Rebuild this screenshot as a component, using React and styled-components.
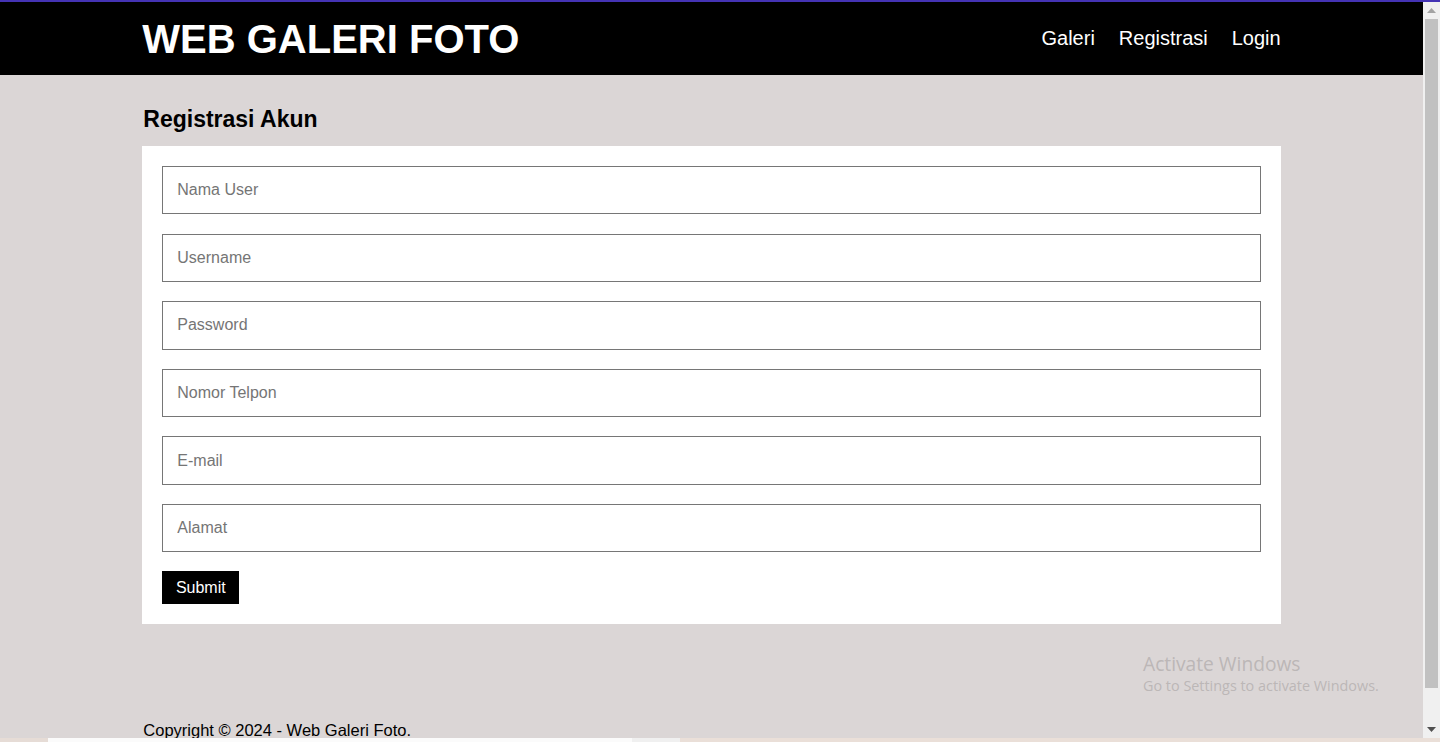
import React from "react";
import styled, { createGlobalStyle } from "styled-components";

const GlobalStyle = createGlobalStyle`
  html, body {
    margin: 0;
    padding: 0;
    height: 742px;
    overflow: hidden;
    font-family: "Liberation Sans", Arial, sans-serif;
  }
  * {
    box-sizing: border-box;
  }
`;

const fields = [
  { name: "namauser", placeholder: "Nama User", type: "text" },
  { name: "username", placeholder: "Username", type: "text" },
  { name: "password", placeholder: "Password", type: "password" },
  { name: "telpon", placeholder: "Nomor Telpon", type: "text" },
  { name: "email", placeholder: "E-mail", type: "email" },
  { name: "alamat", placeholder: "Alamat", type: "text" },
];

const App = () => {
  return (
    <>
      <GlobalStyle />
      <Frame>
        <Viewport>
          <Page>
            <Header>
              <HeaderInner>
                <Brand>WEB GALERI FOTO</Brand>
                <Nav>
                  <NavLink href="#">Galeri</NavLink>
                  <NavLink href="#">Registrasi</NavLink>
                  <NavLink href="#">Login</NavLink>
                </Nav>
              </HeaderInner>
            </Header>

            <Main>
              <Title>Registrasi Akun</Title>
              <Card>
                <Form onSubmit={(e) => e.preventDefault()}>
                  {fields.map((f) => (
                    <Input
                      key={f.name}
                      name={f.name}
                      type={f.type}
                      placeholder={f.placeholder}
                    />
                  ))}
                  <SubmitButton type="submit">Submit</SubmitButton>
                </Form>
              </Card>
            </Main>

            <Footer>Copyright © 2024 - Web Galeri Foto.</Footer>

            <Watermark>
              <WatermarkTitle>Activate Windows</WatermarkTitle>
              <WatermarkText>Go to Settings to activate Windows.</WatermarkText>
            </Watermark>
          </Page>

          <Scrollbar>
            <ArrowButton>
              <svg width="9" height="5" viewBox="0 0 9 5">
                <path d="M0 5 L4.5 0 L9 5 Z" fill="#a3a3a3" />
              </svg>
            </ArrowButton>
            <Track>
              <Thumb />
            </Track>
            <ArrowButton>
              <svg width="9" height="5" viewBox="0 0 9 5">
                <path d="M0 0 L9 0 L4.5 5 Z" fill="#505050" />
              </svg>
            </ArrowButton>
          </Scrollbar>
        </Viewport>
        <Taskbar />
      </Frame>
    </>
  );
};

const Frame = styled.div`
  height: 742px;
  border-top: 2px solid #4433b4;
  display: flex;
  flex-direction: column;
`;

const Viewport = styled.div`
  flex: 1;
  display: flex;
  min-height: 0;
`;

const Taskbar = styled.div`
  height: 4px;
  background: linear-gradient(
    to right,
    #e6dcd6 0,
    #e6dcd6 48px,
    #fbfbfb 48px,
    #fbfbfb 632px,
    #f0f0f0 632px,
    #f0f0f0 680px,
    #eadfd8 680px
  );
`;

const Page = styled.div`
  position: relative;
  flex: 1;
  background-color: #dbd6d6;
  overflow: hidden;
`;

const Header = styled.header`
  background-color: #000;
  height: 73px;
`;

const HeaderInner = styled.div`
  width: 80%;
  height: 100%;
  margin: 0 auto;
  display: flex;
  align-items: center;
  justify-content: space-between;
`;

const Brand = styled.h1`
  margin: 0;
  color: #fff;
  font-size: 40px;
  font-weight: 700;
  line-height: 46px;
`;

const Nav = styled.nav`
  display: flex;
  gap: 24px;
`;

const NavLink = styled.a`
  color: #fff;
  text-decoration: none;
  font-size: 20px;
  line-height: 23px;
`;

const Main = styled.main`
  width: 80%;
  margin: 0 auto;
  padding-top: 31px;
`;

const Title = styled.h2`
  margin: 0 0 14px 1px;
  font-size: 23px;
  line-height: 26px;
  font-weight: 700;
  color: #000;
`;

const Card = styled.div`
  background-color: #fff;
  padding: 20px;
`;

const Form = styled.form`
  display: flex;
  flex-direction: column;
  align-items: flex-start;
  gap: 19.2px;
`;

const Input = styled.input`
  width: 100%;
  height: 48.4px;
  padding: 0 14px;
  font-family: "Liberation Sans", Arial, sans-serif;
  font-size: 16px;
  color: #000;
  border: 1px solid #767676;
  border-radius: 0;
  outline: none;
  background: #fff;

  &::placeholder {
    color: #757575;
  }
`;

const SubmitButton = styled.button`
  background-color: #000;
  color: #fff;
  border: none;
  height: 33px;
  padding: 0 13.6px;
  font-family: "Liberation Sans", Arial, sans-serif;
  font-size: 16px;
  line-height: 19px;
  cursor: pointer;
`;

const Footer = styled.footer`
  width: 80%;
  margin: 97px auto 0;
  padding-left: 1px;
  font-size: 16.5px;
  line-height: 19px;
  color: #000;
`;

const Watermark = styled.div`
  position: absolute;
  left: 1143px;
  top: 649px;
  font-family: "Open Sans", "Noto Sans", sans-serif;
  color: #bcb7b7;
  pointer-events: none;
`;

const WatermarkTitle = styled.div`
  font-size: 19.2px;
  line-height: 25px;
`;

const WatermarkText = styled.div`
  font-size: 14.4px;
  line-height: 20px;
`;

const Scrollbar = styled.div`
  width: 17px;
  background-color: #f0f0f0;
  display: flex;
  flex-direction: column;
`;

const ArrowButton = styled.div`
  height: 17px;
  display: flex;
  align-items: center;
  justify-content: center;
`;

const Track = styled.div`
  flex: 1;
  padding: 0 2px 33px 2px;
`;

const Thumb = styled.div`
  height: 100%;
  background-color: #c1c1c1;
`;

export default App;
